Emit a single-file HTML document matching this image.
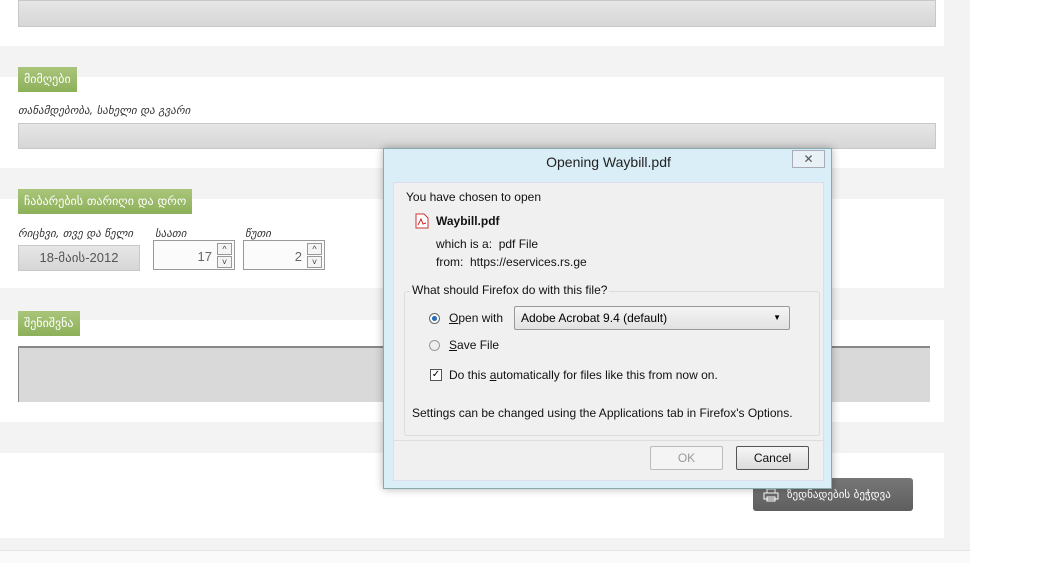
<!DOCTYPE html>
<html><head><meta charset="utf-8"><style>
*{margin:0;padding:0;box-sizing:border-box}
body{width:1062px;height:563px;overflow:hidden;background:#fff;font-family:"Liberation Sans","DejaVu Sans",sans-serif;position:relative}
.bg{position:absolute;left:0;top:0;width:970px;height:563px;background:#f3f3f3}
.p{position:absolute;left:0;width:944px;background:#fff}
.inp{position:absolute;background:linear-gradient(#e6e6e6,#d6d6d6);border:1px solid #c8c8c8}
.lab{position:absolute;background:linear-gradient(#a9c57a,#8db05a);color:#fff;font-size:12px;padding:0 6px;height:25px;line-height:25px;font-family:"DejaVu Sans",sans-serif}
.sm{position:absolute;font-size:11px;font-style:italic;color:#333;font-family:"DejaVu Sans",sans-serif}
.spin{position:absolute;border:1px solid #999;background:#fbfbfb;height:30px;font-size:13px;color:#666;text-align:right;padding:8px 22px 0 0}
.spin i{position:absolute;right:2px;width:15px;height:12px;border:1px solid #999;background:#f4f4f4;font-style:normal;font-size:9px;line-height:11px;text-align:center;color:#444}
.d{position:absolute;left:383px;top:148px;width:449px;height:341px;background:#d9eef7;border:1px solid #8aa;box-shadow:0 0 8px rgba(0,0,0,.3)}
.di{position:absolute;left:9px;top:33px;width:431px;height:299px;background:#f0f0f0;border:1px solid #dde}
.t{position:absolute;font-size:12px;color:#111}
.btn{position:absolute;height:24px;border:1px solid #999;border-radius:2px;font-size:12px;text-align:center;line-height:22px;background:linear-gradient(#f6f6f6,#dcdcdc)}
</style></head><body>
<div class="bg"></div>
<div class="p" style="top:0;height:46px"></div>
<div class="inp" style="left:18px;top:0;width:918px;height:27px"></div>
<div class="p" style="top:77px;height:91px"></div>
<div class="lab" style="left:18px;top:67px">მიმღები</div>
<div class="sm" style="left:18px;top:104px">თანამდებობა, სახელი და გვარი</div>
<div class="inp" style="left:18px;top:123px;width:918px;height:26px"></div>
<div class="p" style="top:199px;height:89px"></div>
<div class="lab" style="left:18px;top:189px">ჩაბარების თარიღი და დრო</div>
<div class="sm" style="left:18px;top:227px">რიცხვი, თვე და წელი</div>
<div class="sm" style="left:155px;top:227px">საათი</div>
<div class="sm" style="left:245px;top:227px">წუთი</div>
<div class="inp" style="left:18px;top:245px;width:122px;height:26px;text-align:center;font-size:13px;color:#555;line-height:24px">18-მაის-2012</div>
<div class="spin" style="left:153px;top:240px;width:82px">17<i style="top:2px">^</i><i style="top:15px">˅</i></div>
<div class="spin" style="left:243px;top:240px;width:82px">2<i style="top:2px">^</i><i style="top:15px">˅</i></div>
<div class="p" style="top:320px;height:102px"></div>
<div class="lab" style="left:18px;top:311px">შენიშვნა</div>
<div style="position:absolute;left:18px;top:346px;width:912px;height:56px;background:#d9d9d9;border-top:2px solid #888;border-left:1px solid #888"></div>
<div class="p" style="top:453px;height:85px"></div>
<div style="position:absolute;left:753px;top:478px;width:160px;height:33px;background:linear-gradient(#777,#5e5e5e);border-radius:3px;color:#fff;font-size:11px;line-height:33px;padding-left:34px;font-family:'DejaVu Sans',sans-serif">ზედნადების ბეჭდვა
<svg style="position:absolute;left:10px;top:10px" width="16" height="14" viewBox="0 0 16 14" fill="none" stroke="#fff"><rect x="4" y="1" width="8" height="4"/><rect x="1" y="5" width="14" height="6"/><rect x="4" y="9" width="8" height="4"/></svg></div>
<div style="position:absolute;left:0;top:550px;width:970px;height:13px;background:#fafafa;border-top:1px solid #e4e4e4"></div>
<div class="d">
<div style="position:absolute;left:0;top:5px;width:449px;text-align:center;font-size:14px;color:#222">Opening Waybill.pdf</div>
<div style="position:absolute;right:6px;top:1px;width:33px;height:18px;border:1px solid #aab;background:#e8f2f6;text-align:center;font-size:12px;color:#555;line-height:16px">✕</div>
<div class="di">
<div class="t" style="left:12px;top:7px">You have chosen to open</div>
<svg style="position:absolute;left:21px;top:30px" width="14" height="16" viewBox="0 0 14 16"><path d="M1 1h8l4 4v10H1z" fill="#fff" stroke="#c33"/><path d="M3 12l3-6 2 5 3-1" fill="none" stroke="#c22"/></svg>
<div class="t" style="left:42px;top:31px;font-weight:bold">Waybill.pdf</div>
<div class="t" style="left:42px;top:54px">which is a:&nbsp; pdf File</div>
<div class="t" style="left:42px;top:72px">from:&nbsp; https://eservices.rs.ge</div>
<div style="position:absolute;left:10px;top:108px;width:416px;height:145px;border:1px solid #dcdcdc;border-radius:3px"></div>
<div class="t" style="left:16px;top:100px;background:#f0f0f0;padding:0 2px">What should Firefox do with this file?</div>
<div style="position:absolute;left:35px;top:130px;width:11px;height:11px;border-radius:50%;border:1px solid #666;background:radial-gradient(#2a6bb8 35%,#fff 45%)"></div>
<div class="t" style="left:55px;top:128px"><u>O</u>pen with</div>
<div style="position:absolute;left:120px;top:123px;width:276px;height:24px;border:1px solid #999;border-radius:2px;background:linear-gradient(#f4f4f4,#e2e2e2);font-size:12px;line-height:22px;padding-left:6px">Adobe Acrobat 9.4 (default)<span style="position:absolute;right:8px;font-size:8px">▼</span></div>
<div style="position:absolute;left:35px;top:157px;width:11px;height:11px;border-radius:50%;border:1px solid #999;background:#eee"></div>
<div class="t" style="left:55px;top:155px"><u>S</u>ave File</div>
<div style="position:absolute;left:36px;top:186px;width:12px;height:12px;border:1px solid #555;background:#fff;font-size:10px;line-height:10px;text-align:center">✓</div>
<div class="t" style="left:55px;top:185px">Do this <u>a</u>utomatically for files like this from now on.</div>
<div class="t" style="left:18px;top:223px">Settings can be changed using the Applications tab in Firefox's Options.</div>
<div style="position:absolute;left:0;top:257px;width:431px;border-top:1px solid #ddd"></div>
<div class="btn" style="left:256px;top:263px;width:73px;color:#999;border-color:#bbb;background:#f4f4f4">OK</div>
<div class="btn" style="left:342px;top:263px;width:73px;color:#111;border-color:#555">Cancel</div>
</div></div>
</body></html>
